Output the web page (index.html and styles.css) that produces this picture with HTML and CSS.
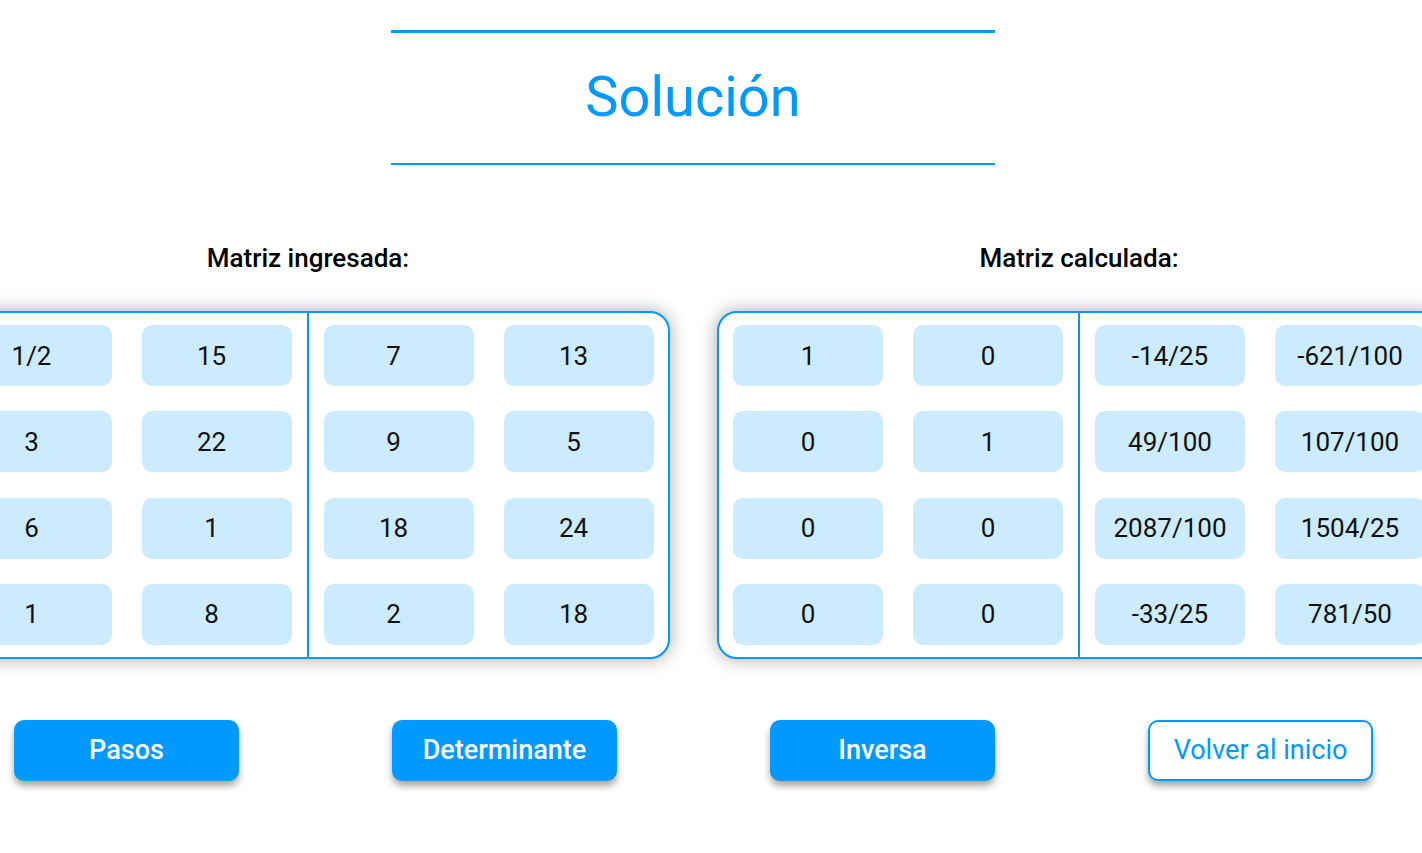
FILE: index.html
```html
<!DOCTYPE html>
<html lang="es">
<head>
<meta charset="utf-8">
<title>Solución</title>
<link rel="stylesheet" href="styles.css">
</head>
<body>
<div class="page">
  <header class="title-block">
    <h1 class="title">Solución</h1>
  </header>

  <section class="matrices">
    <div class="panel">
      <h2 class="label">Matriz ingresada:</h2>
      <div class="box box-input">
        <div class="half half-left">
          <div class="cell">1/2</div><div class="cell">15</div>
          <div class="cell">3</div><div class="cell">22</div>
          <div class="cell">6</div><div class="cell">1</div>
          <div class="cell">1</div><div class="cell">8</div>
        </div>
        <div class="divider"></div>
        <div class="half half-right">
          <div class="cell">7</div><div class="cell">13</div>
          <div class="cell">9</div><div class="cell">5</div>
          <div class="cell">18</div><div class="cell">24</div>
          <div class="cell">2</div><div class="cell">18</div>
        </div>
      </div>
    </div>
    <div class="panel">
      <h2 class="label">Matriz calculada:</h2>
      <div class="box">
        <div class="half half-left">
          <div class="cell">1</div><div class="cell">0</div>
          <div class="cell">0</div><div class="cell">1</div>
          <div class="cell">0</div><div class="cell">0</div>
          <div class="cell">0</div><div class="cell">0</div>
        </div>
        <div class="divider"></div>
        <div class="half half-right">
          <div class="cell">-14/25</div><div class="cell">-621/100</div>
          <div class="cell">49/100</div><div class="cell">107/100</div>
          <div class="cell">2087/100</div><div class="cell">1504/25</div>
          <div class="cell">-33/25</div><div class="cell">781/50</div>
        </div>
      </div>
    </div>
  </section>

  <nav class="actions">
    <button class="btn">Pasos</button>
    <button class="btn">Determinante</button>
    <button class="btn">Inversa</button>
    <button class="btn btn-outline">Volver al inicio</button>
  </nav>
</div>
</body>
</html>
```

FILE: styles.css
```css
html, body {
  margin: 0;
  padding: 0;
  background: #ffffff;
  overflow: hidden;
}

body {
  font-family: Roboto, "Noto Sans", sans-serif;
  color: #000;
}

.page {
  width: 1387px;
  height: 853px;
}

.title-block {
  width: 604px;
  height: 130px;
  margin: 30px 0 0 391px;
  border-top: 3px solid #0099ff;
  border-bottom: 2px solid #0099ff;
  display: flex;
  align-items: center;
  justify-content: center;
}

.title {
  margin: 0;
  font-size: 56px;
  font-weight: 400;
  color: #0099ff;
  line-height: 1;
  padding-bottom: 2px;
}

.matrices {
  display: flex;
  justify-content: center;
  gap: 47px;
  margin-top: 78px;
}

.panel {
  display: flex;
  flex-direction: column;
  align-items: center;
  flex: none;
}

.label {
  margin: 0 0 38px;
  font-size: 26px;
  font-weight: 500;
  line-height: 30px;
  color: #000;
}

.box {
  display: flex;
  border: 2px solid #0099ff;
  border-radius: 20px;
  background: #fff;
  box-shadow: 0 0 18px rgba(0, 0, 0, 0.35);
}

.half {
  display: grid;
  grid-template-columns: 150px 150px;
  grid-auto-rows: 61px;
  column-gap: 30px;
  row-gap: 25.33px;
  padding-top: 12px;
  padding-bottom: 12px;
}

.half-left {
  padding-left: 14px;
  padding-right: 15px;
}

.half-right {
  padding-left: 15px;
  padding-right: 14px;
}

.divider {
  width: 2px;
  background: #0099ff;
}

.cell {
  background: #cdebfe;
  border-radius: 10px;
  display: flex;
  align-items: center;
  justify-content: center;
  font-size: 26px;
  color: #111;
}

.box-input .cell {
  padding-right: 11px;
}

.actions {
  display: flex;
  justify-content: center;
  gap: 153px;
  margin-top: 61px;
}

.btn {
  flex: none;
  width: 225px;
  height: 61px;
  border: 2px solid #0099ff;
  border-radius: 10px;
  background: #0099ff;
  color: #fff;
  font-family: Roboto, "Noto Sans", sans-serif;
  font-size: 27px;
  font-weight: 500;
  box-shadow: 0 5px 7px rgba(0, 0, 0, 0.35);
  cursor: pointer;
}

.btn-outline {
  background: #fff;
  color: #0099ff;
  font-weight: 400;
}
```
